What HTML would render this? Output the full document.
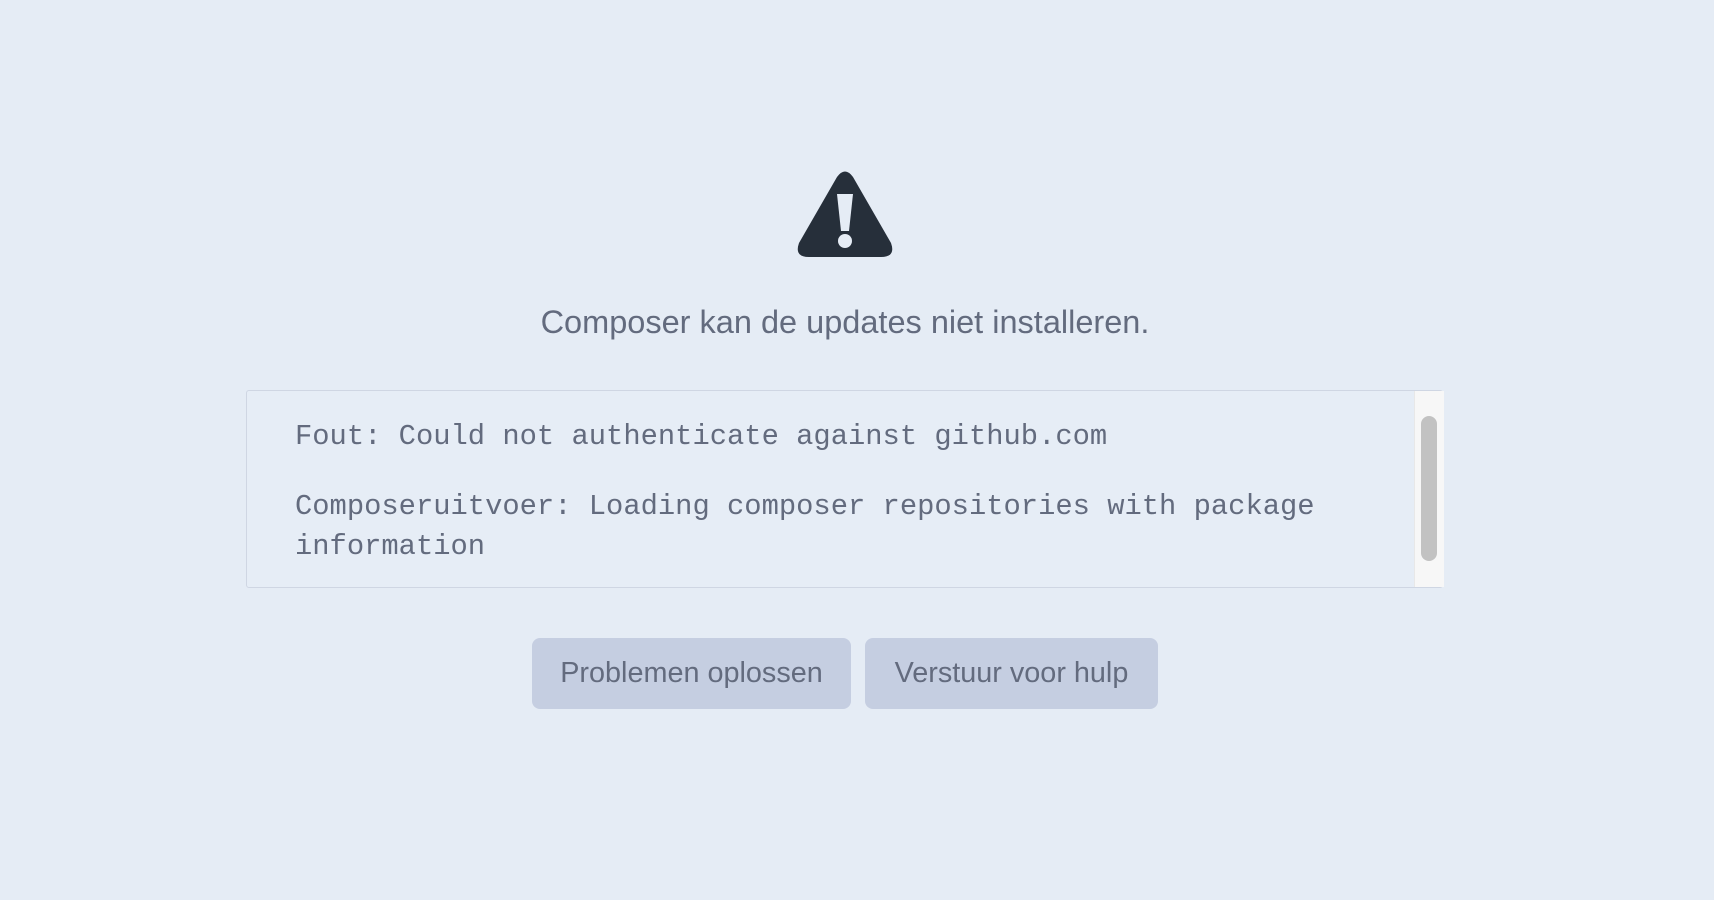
<!DOCTYPE html>
<html><head><meta charset="utf-8"><style>
html,body{margin:0;padding:0;width:1714px;height:900px;background:#e5ecf5;overflow:hidden;font-family:"Liberation Sans",sans-serif;}
.icon{position:absolute;left:797px;top:171px;}
.title{position:absolute;left:0;width:1690px;top:304px;text-align:center;font-size:32.5px;color:#636b7e;}
.box{position:absolute;left:246px;top:390px;width:1197px;height:198px;border:1.5px solid #cfd6e3;border-radius:3px;box-sizing:border-box;background:#e6edf6;}
.mono{position:absolute;left:295px;font-family:"Liberation Mono",monospace;font-size:28.8px;color:#636b7e;line-height:40px;}
.sb{position:absolute;left:1414px;top:391px;width:29px;height:196px;background:#f7f7f7;border-left:1px solid #e8e8e8;}
.thumb{position:absolute;left:1421px;top:416px;width:16px;height:145px;background:#c2c2c2;border-radius:8px;}
.btn{position:absolute;top:638px;height:71px;background:#c5cee1;border-radius:8px;color:#636b7e;font-size:28.8px;line-height:71px;text-align:center;}
</style></head><body>
<svg class="icon" width="96" height="88" viewBox="0 0 96 88">
<path d="M40 6 Q48 -5 56 6 L94 72 Q99 86 84 86 L12 86 Q-3 86 2 72 Z" fill="#262f3a"/>
<path d="M40 23 L56 23 L52 60 L44 60 Z" fill="#e5ecf5"/>
<circle cx="48" cy="70" r="7" fill="#e5ecf5"/>
</svg>
<div class="title">Composer kan de updates niet installeren.</div>
<div class="box"></div>
<div class="mono" style="top:417px">Fout: Could not authenticate against github.com</div>
<div class="mono" style="top:487px">Composeruitvoer: Loading composer repositories with package<br>information</div>
<div class="sb"></div><div class="thumb"></div>
<div class="btn" style="left:532px;width:319px">Problemen oplossen</div>
<div class="btn" style="left:865px;width:293px">Verstuur voor hulp</div>
</body></html>
